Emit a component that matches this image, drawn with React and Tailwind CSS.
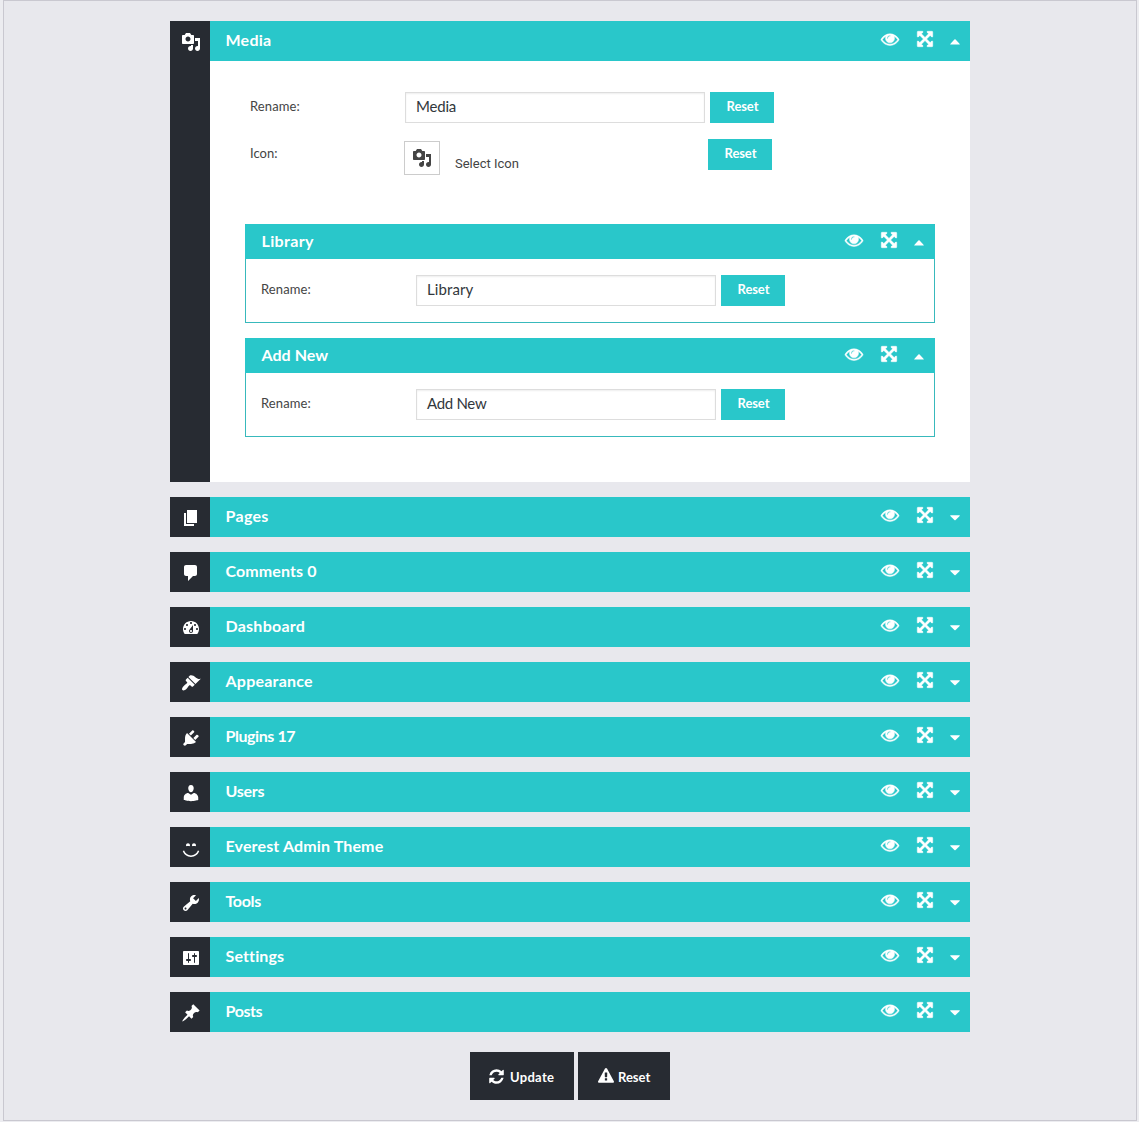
import React from "react";

const DASH = {
  media:
    "M13 11V4c0-.55-.45-1-1-1h-1.67L9 1H5L3.67 3H2c-.55 0-1 .45-1 1v7c0 .55.45 1 1 1h10c.55 0 1-.45 1-1zM7 4.5c1.38 0 2.5 1.12 2.5 2.5S8.38 9.5 7 9.5 4.5 8.38 4.5 7 5.62 4.5 7 4.5zM14 6h5v10.5c0 1.38-1.12 2.5-2.5 2.5S14 17.88 14 16.5s1.12-2.5 2.5-2.5c.17 0 .34.02.5.05V9h-3V6zm-4 8.05V13h2v3.5c0 1.38-1.12 2.5-2.5 2.5S7 17.88 7 16.5 8.12 14 9.5 14c.17 0 .34.02.5.05z",
  page: "M6 15V2h10v13H6zm-1 1h8v2H3V5h2v11z",
  comments:
    "M5 2h9c1.1 0 2 .9 2 2v7c0 1.1-.9 2-2 2h-2l-5 5v-5H5c-1.1 0-2-.9-2-2V4c0-1.1.9-2 2-2z",
  dashboard:
    "M3.76 16h12.48c1.1-1.37 1.76-3.11 1.76-5 0-4.42-3.58-8-8-8s-8 3.58-8 8c0 1.89.66 3.63 1.76 5zM10 4c.55 0 1 .45 1 1s-.45 1-1 1-1-.45-1-1 .45-1 1-1zM6 6c.55 0 1 .45 1 1s-.45 1-1 1-1-.45-1-1 .45-1 1-1zm8 0c.55 0 1 .45 1 1s-.45 1-1 1-1-.45-1-1 .45-1 1-1zm-5.37 5.55L12 7v6c0 1.1-.9 2-2 2s-2-.9-2-2c0-.57.24-1.08.63-1.45zM4 10c.55 0 1 .45 1 1s-.45 1-1 1-1-.45-1-1 .45-1 1-1zm12 0c.55 0 1 .45 1 1s-.45 1-1 1-1-.45-1-1 .45-1 1-1zm-5 3c0-.55-.45-1-1-1s-1 .45-1 1 .45 1 1 1 1-.45 1-1z",
  appearance:
    "M14.48 11.06L7.41 3.99l1.5-1.5c.5-.56 2.3-.47 3.51.32 1.21.8 1.43 1.28 2.91 2.1 1.18.64 2.45 1.26 4.45.85zm-.71.71L6.7 4.7 4.93 6.47c-.39.39-.39 1.02 0 1.41l1.06 1.06c.39.39.39 1.03 0 1.42-.6.6-1.43 1.11-2.21 1.69-.35.26-.7.53-1.01.84C1.43 14.23.4 16.08 1.4 17.07c.99 1 2.84-.03 4.18-1.36.31-.31.58-.66.85-1.02.57-.78 1.08-1.61 1.69-2.21.39-.39 1.02-.39 1.41 0l1.06 1.06c.39.39 1.02.39 1.41 0z",
  plugins:
    "M13.11 4.36L9.87 7.6 8 5.73l3.24-3.24c.35-.34 1.05-.2 1.56.32.52.51.66 1.21.31 1.55zm-8 1.77l.91-1.12 9.01 9.01-1.19.84c-.71.71-2.63 1.16-3.82 1.16H6.14L4.9 17.26c-.59.59-1.54.59-2.12 0-.59-.58-.59-1.53 0-2.12l1.24-1.24v-3.88c0-1.13.4-3.19 1.09-3.89zm7.26 3.97l3.24-3.24c.34-.35 1.04-.21 1.55.31.52.51.66 1.21.31 1.55l-3.24 3.25z",
  users:
    "M10 9.25c-2.27 0-2.73-3.44-2.73-3.44C7 4.02 7.82 2 9.97 2c2.16 0 2.98 2.02 2.71 3.81 0 0-.41 3.44-2.68 3.44zm0 2.57L12.72 10c2.39 0 4.52 2.33 4.52 4.53v2.49s-3.65 1.13-7.24 1.13c-3.65 0-7.24-1.13-7.24-1.13v-2.49c0-2.25 1.94-4.48 4.47-4.48z",
  smiley:
    "M7 5.2c1.1 0 2 .89 2 2 0 .37-.11.71-.28 1C8.72 8.2 8 8 7 8s-1.72.2-1.72.2c-.17-.29-.28-.63-.28-1 0-1.11.9-2 2-2zm6 0c1.11 0 2 .89 2 2 0 .37-.11.71-.28 1 0 0-.72-.2-1.72-.2s-1.72.2-1.72.2c-.17-.29-.28-.63-.28-1 0-1.11.89-2 2-2zm-3 13.7c3.72 0 7.03-2.36 8.23-5.88l-1.32-.46C15.9 15.52 13.12 17.5 10 17.5s-5.9-1.98-6.91-4.94l-1.32.46c1.2 3.52 4.51 5.88 8.23 5.88z",
  tools:
    "M16.68 9.77c-1.34 1.34-3.3 1.67-4.95.99l-5.41 6.52c-.99.99-2.59.99-3.58 0s-.99-2.59 0-3.57l6.52-5.42c-.68-1.65-.35-3.61.99-4.95 1.28-1.28 3.12-1.62 4.72-1.06l-2.89 2.89 2.82 2.82 2.86-2.87c.53 1.58.18 3.39-1.08 4.65zM3.81 16.21c.4.39 1.04.39 1.43 0 .4-.4.4-1.04 0-1.43-.39-.4-1.03-.4-1.43 0-.39.39-.39 1.03 0 1.43z",
  settings:
    "M18 16V4c0-.55-.45-1-1-1H3c-.55 0-1 .45-1 1v12c0 .55.45 1 1 1h14c.55 0 1-.45 1-1zM8 11h1c.55 0 1 .45 1 1s-.45 1-1 1H8v1.5c0 .28-.22.5-.5.5s-.5-.22-.5-.5V13H6c-.55 0-1-.45-1-1s.45-1 1-1h1V5.5c0-.28.22-.5.5-.5s.5.22.5.5V11zm5-2h-1c-.55 0-1-.45-1-1s.45-1 1-1h1V5.5c0-.28.22-.5.5-.5s.5.22.5.5V7h1c.55 0 1 .45 1 1s-.45 1-1 1h-1v5.5c0 .28-.22.5-.5.5s-.5-.22-.5-.5V9z",
  post: "M10.44 3.02l1.82-1.82 6.36 6.35-1.83 1.82c-1.05-.68-2.48-.57-3.41.36l-.75.75c-.92.93-1.04 2.35-.35 3.41l-1.83 1.82-2.41-2.41-2.8 2.79c-.42.42-3.38 2.71-3.8 2.29s1.86-3.39 2.28-3.81l2.79-2.79L4.1 9.36l1.83-1.82c1.05.69 2.48.57 3.4-.36l.75-.75c.93-.92 1.05-2.35.36-3.41z",
};

const EYE =
  "M1664 960q-152-236-381-353 61 104 61 225 0 185-131.5 316.5t-316.5 131.5-316.5-131.5-131.5-316.5q0-121 61-225-229 117-381 353 133 205 333.5 326.5t434.5 121.5 434.5-121.5 333.5-326.5zm-720-384q0-20-14-34t-34-14q-125 0-214.5 89.5t-89.5 214.5q0 20 14 34t34 14 34-14 14-34q0-86 61-147t147-61q20 0 34-14t14-34zm848 384q0 34-20 69-140 230-376.5 368.5t-499.5 138.5-499.5-139-376.5-368q-20-35-20-69t20-69q140-229 376.5-368t499.5-139 499.5 139 376.5 368q20 35 20 69z";
const ARROWS =
  "M1411 541l-355 355 355 355 144-144q29-31 70-14 39 17 39 59v448q0 26-19 45t-45 19h-448q-42 0-59-40-17-39 14-69l144-144-355-355-355 355 144 144q31 30 14 69-17 40-59 40h-448q-26 0-45-19t-19-45v-448q0-42 40-59 39-17 69 14l144 144 355-355-355-355-144 144q-19 19-45 19-12 0-24-5-40-17-40-59v-448q0-26 19-45t45-19h448q42 0 59 40 17 39-14 69l-144 144 355 355 355-355-144-144q-31-30-14-69 17-40 59-40h448q26 0 45 19t19 45v448q0 42-39 59-13 5-25 5-26 0-45-19z";
const REFRESH =
  "M1639 1056q0 5-1 7-64 268-268 434.5t-478 166.5q-146 0-282.5-55t-243.5-157l-129 129q-19 19-45 19t-45-19-19-45v-448q0-26 19-45t45-19h448q26 0 45 19t19 45-19 45l-137 137q71 66 161 102t187 36q134 0 250-65t186-179q11-17 53-117 8-23 30-23h192q13 0 22.5 9.5t9.5 22.5zm25-800v448q0 26-19 45t-45 19h-448q-26 0-45-19t-19-45 19-45l138-138q-148-137-349-137-134 0-250 65t-186 179q-11 17-53 117-8 23-30 23h-199q-13 0-22.5-9.5t-9.5-22.5v-7q65-268 270-434.5t480-166.5q146 0 284 55.5t245 156.5l130-129q19-19 45-19t45 19 19 45z";
const WARNING =
  "M1024 1375v-190q0-14-9.5-23.5t-22.5-9.5h-192q-13 0-22.5 9.5t-9.5 23.5v190q0 14 9.5 23.5t22.5 9.5h192q13 0 22.5-9.5t9.5-23.5zm-2-374l18-459q0-12-10-19-13-11-24-11h-220q-11 0-24 11-10 7-10 21l17 457q0 10 10 16.5t24 6.5h185q14 0 23.5-6.5t10.5-16.5zm-14-934l768 1408q35 63-2 126-17 29-46.5 46t-63.5 17h-1536q-34 0-63.5-17t-46.5-46q-37-63-2-126l768-1408q17-31 47-49t65-18 65 18 47 49z";

function Dash({ name }) {
  return (
    <svg viewBox="0 0 20 20" className="size-5 fill-current">
      <path d={DASH[name]} />
    </svg>
  );
}

function Glyph({ d, className }) {
  return (
    <svg viewBox="0 0 1792 1792" className={`shrink-0 overflow-visible fill-current ${className}`}>
      <path d={d} />
    </svg>
  );
}

function Controls({ open }) {
  return (
    <div className="flex text-white">
      <Glyph d={EYE} className="size-[18px] stroke-current stroke-[50px]" />
      <Glyph d={ARROWS} className="ml-[17px] size-[18px] stroke-current stroke-[50px]" />
      {open ? (
        <svg viewBox="0 0 10 6" className="mt-[9px] ml-4 h-[6px] w-[10px] fill-current">
          <path d="M4.4.6Q5 0 5.6.6L9.7 4.9Q10.1 5.6 9.3 5.6H.7Q-.1 5.6.3 4.9Z" />
        </svg>
      ) : (
        <svg viewBox="0 0 10 6" className="mt-[9px] ml-4 h-[6px] w-[10px] fill-current">
          <path d="M4.4 5Q5 5.6 5.6 5L9.7.9Q10.1.2 9.3.2H.7Q-.1.2.3.9Z" />
        </svg>
      )}
    </div>
  );
}

function Bar({ title, tracking, open }) {
  return (
    <div className="flex h-10 items-start justify-between bg-[#29c7ca] pt-[9px] pr-[10px] pl-[15.5px]">
      <span className={`-mt-px text-[16px] leading-[21px] font-bold whitespace-nowrap text-white ${tracking}`}>
        {title}
      </span>
      <Controls open={open} />
    </div>
  );
}

function ResetButton() {
  return (
    <button className="h-[31px] w-16 bg-[#29c7ca] pb-px pl-px text-[13px] font-bold tracking-[-0.1px] text-white">
      Reset
    </button>
  );
}

function Field({ value, tracking }) {
  return (
    <div className="flex">
      <span className="w-[155px] pt-[5px] text-[13px] leading-[19px] tracking-[0.1px] text-[#444]">Rename:</span>
      <div
        className={`mr-[5px] h-[31px] w-[300px] border border-[#ddd] bg-white pl-[10px] text-[15px] leading-[27px] text-[#32373c] shadow-[inset_0_1px_2px_rgba(0,0,0,0.07)] ${tracking}`}
      >
        {value}
      </div>
      <ResetButton />
    </div>
  );
}

function SubItem({ title, tracking, fieldTracking }) {
  return (
    <div className="h-[99px] border border-[#38b9bc] border-t-[#29c7ca] bg-white">
      <div className="-mx-px flex h-[34px] items-start justify-between bg-[#29c7ca] pt-[6px] pr-[11px] pl-[16.5px]">
        <span className={`-mt-px text-[16px] leading-[21px] font-bold text-white ${tracking}`}>{title}</span>
        <Controls open />
      </div>
      <div className="pt-4 pl-[15px]">
        <Field value={title} tracking={fieldTracking} />
      </div>
    </div>
  );
}

const ITEMS = [
  ["Pages", "page", "tracking-[0.3px]"],
  ["Comments 0", "comments", "tracking-[0.1px]"],
  ["Dashboard", "dashboard", "tracking-[0.25px]"],
  ["Appearance", "appearance", "tracking-[0.23px]"],
  ["Plugins 17", "plugins", "tracking-[-0.43px]"],
  ["Users", "users", "tracking-[-0.25px]"],
  ["Everest Admin Theme", "smiley", "tracking-[0.14px]"],
  ["Tools", "tools", "tracking-[-0.35px]"],
  ["Settings", "settings", "tracking-[0.13px]"],
  ["Posts", "post", "tracking-[-0.4px]"],
];

export default function App() {
  return (
    <div className="h-[1122px] bg-[#ececf0] pr-[2px] pl-[3px] font-['Lato',sans-serif]">
      <main className="h-[1121px] border border-[#c9c8d0] bg-[#e8e8ed] pt-5">
        <div className="ml-[166px] w-[800px]">
          <section className="flex h-[461px]">
            <div className="w-10 bg-[#272b32] pt-[11px] pl-[11px] text-white">
              <Dash name="media" />
            </div>
            <div className="flex-1 bg-white">
              <Bar title="Media" tracking="tracking-[0.25px]" open />
              <div className="pt-[31px] pl-10">
                <Field value="Media" tracking="tracking-[-0.2px]" />
              </div>
              <div className="mt-4 flex pl-10">
                <span className="w-[154px] pt-[5px] text-[13px] leading-[19px] text-[#444]">Icon:</span>
                <div className="mt-[2px] flex h-[34px] w-9 items-center justify-center border border-[#ccc] text-[#444]">
                  <Dash name="media" />
                </div>
                <span className="ml-[15px] w-[253px] pt-[15px] font-['Roboto',sans-serif] text-[13px] leading-[20px] text-[#444]">
                  Select Icon
                </span>
                <ResetButton />
              </div>
              <div className="mt-[49px] mr-[35px] ml-[35px] flex flex-col gap-[15px]">
                <SubItem title="Library" tracking="tracking-[0.35px]" fieldTracking="tracking-[0.1px]" />
                <SubItem title="Add New" tracking="tracking-[0.05px]" fieldTracking="tracking-[-0.3px]" />
              </div>
            </div>
          </section>
          {ITEMS.map(([title, icon, tracking]) => (
            <section key={title} className="mt-[15px] flex h-10">
              <div className="w-10 bg-[#272b32] pt-[11px] pl-[11px] text-white">
                <Dash name={icon} />
              </div>
              <div className="flex-1">
                <Bar title={title} tracking={tracking} />
              </div>
            </section>
          ))}
          <div className="mt-5 flex justify-center gap-1 text-[13px] font-bold text-white">
            <button className="flex h-12 w-[104px] bg-[#272b32] pt-4 pl-[18px]">
              <Glyph d={REFRESH} className="size-[17px]" />
              <span className="ml-[5px] leading-[19px] tracking-[0.3px]">Update</span>
            </button>
            <button className="flex h-12 w-[92px] bg-[#272b32] pt-4 pl-5">
              <Glyph d={WARNING} className="size-[16px]" />
              <span className="ml-1 leading-[19px]">Reset</span>
            </button>
          </div>
        </div>
      </main>
    </div>
  );
}
